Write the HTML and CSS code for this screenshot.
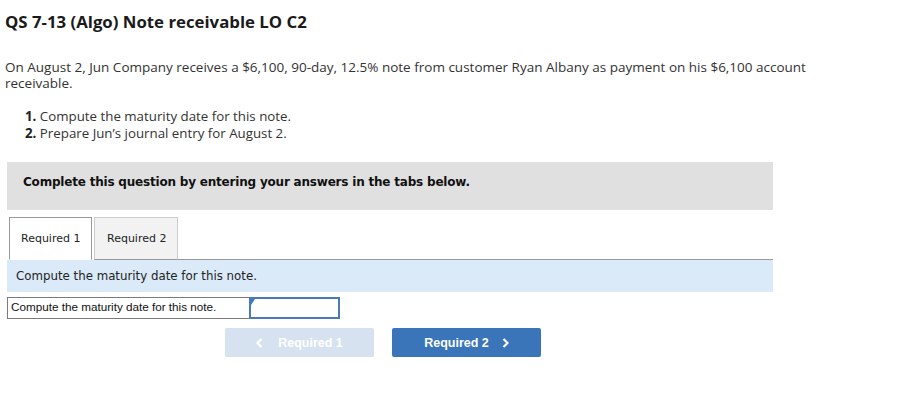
FILE: index.html
```html
<!DOCTYPE html>
<html>
<head>
<meta charset="utf-8">
<link rel="stylesheet" href="styles.css">
</head>
<body>
<div class="page">
  <h1 class="title">QS 7-13 (Algo) Note receivable LO C2</h1>
  <p class="intro">On August 2, Jun Company receives a $6,100, 90-day, 12.5% note from customer Ryan Albany as payment on his $6,100 account receivable.</p>
  <ol class="steps">
    <li><b>1.</b> Compute the maturity date for this note.</li>
    <li><b>2.</b> Prepare Jun’s journal entry for August 2.</li>
  </ol>
  <div class="notice">Complete this question by entering your answers in the tabs below.</div>
  <div class="tabs">
    <div class="tab active">Required 1</div>
    <div class="tab">Required 2</div>
    <div class="tab-rest"></div>
  </div>
  <div class="prompt">Compute the maturity date for this note.</div>
  <div class="answer-row">
    <div class="label-cell">Compute the maturity date for this note.</div>
    <div class="input-cell"><span class="marker"></span></div>
  </div>
  <div class="nav">
    <button class="btn prev"><svg class="chev" width="7" height="10" viewBox="0 0 7 10"><polyline points="5.5,1 1.5,5 5.5,9" fill="none" stroke="#fff" stroke-width="2.2"/></svg>Required 1</button>
    <button class="btn next">Required 2<svg class="chev" width="7" height="10" viewBox="0 0 7 10"><polyline points="1.5,1 5.5,5 1.5,9" fill="none" stroke="#fff" stroke-width="2.2"/></svg></button>
  </div>
</div>
</body>
</html>
```
FILE: styles.css
```css
* { box-sizing: border-box; }
html, body { margin: 0; padding: 0; background: #fff; }
.page { padding: 0 0 0 5px; width: 780px; }
.title {
  font-family: "Open Sans", "Lato", sans-serif;
  font-weight: 700;
  font-size: 16.8px;
  color: #1a1a1a;
  margin: 0;
  padding-top: 11px;
  line-height: 22px;
}
.intro {
  font-family: "Open Sans", "Lato", sans-serif;
  font-size: 13.5px;
  color: #333;
  line-height: 16px;
  margin: 26px 0 0 0;
  width: 815px;
}
.steps {
  list-style: none;
  margin: 17px 0 0 20px;
  padding: 0;
  font-family: "Open Sans", "Lato", sans-serif;
  font-size: 13.3px;
  color: #333;
  line-height: 17px;
}
.steps b { color: #222; }
.notice {
  margin: 20px 0 0 2px;
  width: 766px;
  height: 48px;
  background: #e0e0e0;
  font-family: "DejaVu Sans", Verdana, sans-serif;
  font-weight: 700;
  font-size: 12px;
  letter-spacing: -0.2px;
  color: #111;
  padding: 13px 0 0 16px;
}
.tabs {
  display: flex;
  align-items: flex-end;
  margin: 6px 0 0 2px;
  width: 766px;
  height: 44px;
}
.tab {
  font-family: "DejaVu Sans", Verdana, sans-serif;
  font-size: 11px;
  color: #222;
  height: 43px;
  width: 84px;
  border: 1px solid #ccc;
  border-bottom: 1px solid #999;
  background: #f2f2f2;
  display: flex;
  align-items: center;
  padding-left: 12px;
  margin-right: 2px;
}
.tab.active {
  margin-left: 2px;
  background: #fff;
  border: 1px solid #999;
  border-bottom: 1px solid #fff;
  width: 83px;
  padding-left: 11px;
  color: #222;
}
.tab-rest {
  flex: 1;
  border-bottom: 1px solid #999;
  height: 1px;
  margin-left: -2px;
}
.prompt {
  margin: 0 0 0 2px;
  width: 766px;
  height: 32px;
  background: #dbeaf8;
  font-family: "DejaVu Sans", Verdana, sans-serif;
  font-size: 11.8px;
  color: #222;
  padding: 9px 0 0 9px;
}
.answer-row {
  display: flex;
  margin: 5px 0 0 2px;
  height: 22px;
}
.label-cell {
  width: 242px;
  border: 1px solid #7a7a7a;
  border-right: none;
  font-family: "Liberation Sans", Arial, sans-serif;
  font-size: 11.7px;
  color: #111;
  padding: 2px 0 0 3px;
}
.input-cell {
  position: relative;
  width: 91px;
  border: 2px solid #4a7ab8;
}
.marker {
  position: absolute;
  left: 0; top: 0;
  width: 0; height: 0;
  border-top: 6px solid #3a78c8;
  border-right: 4px solid transparent;
}
.nav {
  display: flex;
  gap: 18px;
  margin: 9px 0 0 220px;
}
.btn {
  width: 149px;
  height: 29px;
  border: none;
  border-radius: 2px;
  font-family: "Liberation Sans", Arial, sans-serif;
  font-weight: 700;
  font-size: 12.5px;
  color: #fff;
  padding: 0;
  display: flex;
  align-items: center;
  justify-content: center;
}
.btn.prev { background: #d6e2f0; }
.btn.next { background: #3a75b9; }
.btn.prev .chev { margin-right: 15px; }
.btn.next .chev { margin-left: 13px; }
```
